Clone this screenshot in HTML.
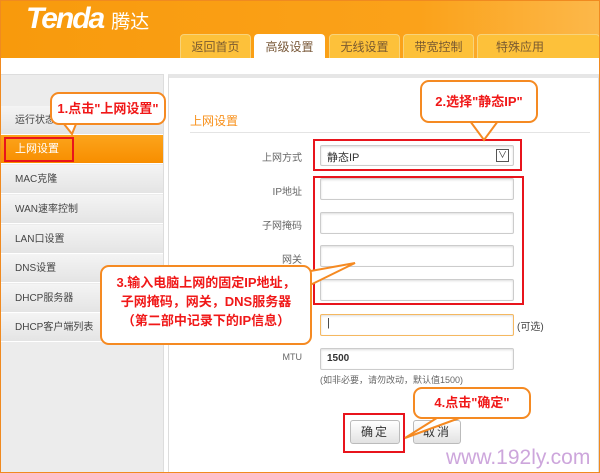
<!DOCTYPE html><html><head><meta charset="utf-8"><style>
*{margin:0;padding:0;box-sizing:border-box}
body{width:600px;height:473px;overflow:hidden;position:relative;font-family:"Liberation Sans","Noto Sans CJK SC",sans-serif;font-size:11px;color:#555;background:#fff}
.a{position:absolute}
.hdr{left:0;top:0;width:600px;height:58px;background:linear-gradient(90deg,#f89a0c,#fba21a 70%,#fcb84a)}
.tab{top:34px;height:24px;width:71px;background:#fdc13a;border:1px solid #f8d37a;border-bottom:none;border-radius:4px 4px 0 0;text-align:center;line-height:24px;font-size:12px;color:#7a5a30}
.side{left:0;top:74px;width:164px;height:399px;background:#ececec;border:1px solid #ddd}
.it{left:1px;width:162px;height:29px;line-height:29px;padding-left:14px;font-size:10px;color:#444;border-bottom:1px solid #fff;background:linear-gradient(#f4f4f4,#e4e4e4)}
.cont{left:168px;top:74px;width:431px;height:399px;border:1px solid #ddd;border-top:4px solid #e6e6e6;background:#fff}
.lbl{width:80px;text-align:right;font-size:10px;color:#666}
.inp{left:320px;width:194px;height:22px;border:1px solid #ccc;border-radius:2px;background:#fff;box-shadow:inset 0 1px 2px #ddd}
.red{border:2px solid #e8141c}
.call{border:2px solid #f58a22;border-radius:9px;background:#fff;color:#f01818;font-weight:bold;text-align:center;font-size:13px}
.btn{top:420px;height:24px;border:1px solid #bbb;border-radius:3px;background:linear-gradient(#fff,#e2e2e2);text-align:center;line-height:22px;font-size:12px;color:#333;letter-spacing:2px}
</style></head><body>
<div class="a hdr"></div>
<div class="a" style="left:26px;top:2px;font:italic bold 30px 'Liberation Sans',sans-serif;color:#fff;letter-spacing:-2px">Tenda<span style="font-size:19px;font-style:normal;font-weight:normal;font-family:'Noto Sans CJK SC';margin-left:8px;letter-spacing:0">腾达</span></div>
<div class="a tab" style="left:180px">返回首页</div>
<div class="a tab" style="left:254px;background:#fff;border-color:#fff;color:#7a5a3a">高级设置</div>
<div class="a tab" style="left:329px">无线设置</div>
<div class="a tab" style="left:403px">带宽控制</div>
<div class="a tab" style="left:477px;width:123px;text-align:left;padding-left:18px">特殊应用</div>
<div class="a side"></div>
<div class="a it" style="top:106px">运行状态</div>
<div class="a it" style="top:135px;background:linear-gradient(#fca41c,#f88e00);color:#fff;font-size:11px">上网设置</div>
<div class="a red" style="left:4px;top:137px;width:70px;height:25px"></div>
<div class="a it" style="top:165px">MAC克隆</div>
<div class="a it" style="top:195px">WAN速率控制</div>
<div class="a it" style="top:225px">LAN口设置</div>
<div class="a it" style="top:254px">DNS设置</div>
<div class="a it" style="top:284px">DHCP服务器</div>
<div class="a it" style="top:313px">DHCP客户端列表</div>
<div class="a cont"></div>
<div class="a" style="left:190px;top:112px;color:#f8901a;font-size:12px">上网设置</div>
<div class="a" style="left:190px;top:132px;width:400px;height:1px;background:#e4e4e4"></div>
<div class="a lbl" style="left:222px;top:149px">上网方式</div>
<div class="a inp" style="top:145px;height:21px;padding:3px 6px;font-size:11px;color:#333">静态IP<span class="a" style="right:4px;top:3px;width:13px;height:13px;border:1px solid #555;font-size:9px;line-height:11px;text-align:center">∨</span></div>
<div class="a red" style="left:313px;top:139px;width:209px;height:32px"></div>
<div class="a lbl" style="left:222px;top:183px">IP地址</div>
<div class="a inp" style="top:178px"></div>
<div class="a lbl" style="left:222px;top:217px">子网掩码</div>
<div class="a inp" style="top:212px"></div>
<div class="a lbl" style="left:222px;top:251px">网关</div>
<div class="a inp" style="top:245px"></div>
<div class="a inp" style="top:279px"></div>
<div class="a red" style="left:313px;top:176px;width:211px;height:129px"></div>
<div class="a lbl" style="left:222px;top:319px">首选DNS服务器</div>
<div class="a inp" style="top:314px;border-color:#f5b860;padding:2px 6px;color:#333">|</div>
<div class="a" style="left:517px;top:318px;font-size:10px;color:#444">(可选)</div>
<div class="a lbl" style="left:222px;top:352px;font-size:9px">MTU</div>
<div class="a inp" style="top:348px;padding:4px 6px;font-size:10px;font-weight:bold;color:#333">1500</div>
<div class="a" style="left:320px;top:373px;font-size:9px;color:#666">(如非必要，请勿改动，默认值1500)</div>
<div class="a btn" style="left:350px;width:50px">确定</div>
<div class="a btn" style="left:413px;width:48px">取消</div>
<div class="a red" style="left:343px;top:413px;width:62px;height:40px"></div>
<svg class="a" style="left:0;top:0" width="600" height="473">
<g fill="#fff" stroke="#f58a22" stroke-width="2">
<path d="M64,124 L72,134 L76,124Z"/>
<path d="M470,121 L484,140 L498,121Z"/>
<path d="M250,282 L355,263 L300,290Z"/>
<path d="M440,416 L405,438 L465,416Z"/>
</g></svg>
<div class="a call" style="left:50px;top:92px;width:116px;height:33px;line-height:30px">1.点击"上网设置"</div>
<div class="a call" style="left:420px;top:80px;width:118px;height:43px;line-height:40px">2.选择"静态IP"</div>
<div class="a call" style="left:100px;top:265px;width:212px;height:80px;line-height:19px;padding-top:6px">3.输入电脑上网的固定IP地址，<br>子网掩码，网关，DNS服务器<br>（第二部中记录下的IP信息）</div>
<div class="a call" style="left:413px;top:387px;width:118px;height:32px;line-height:28px">4.点击"确定"</div>
<div class="a" style="left:446px;top:446px;font-size:21px;color:#cda6dc">www.192ly.com</div>
<div class="a" style="left:0;top:0;width:600px;height:473px;border:1px solid #f08a20"></div>
</body></html>
